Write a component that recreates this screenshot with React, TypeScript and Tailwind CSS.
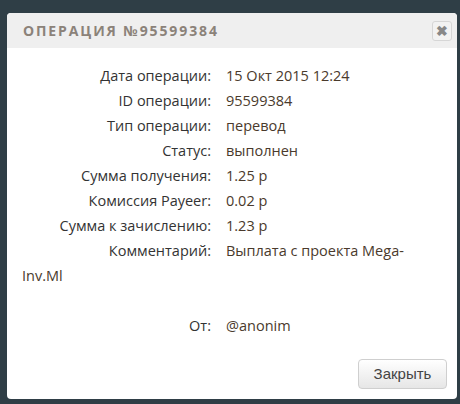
import React from 'react';

const rows: [string, string][] = [
    ['Дата операции:', '15 Окт 2015 12:24'],
    ['ID операции:', '95599384'],
    ['Тип операции:', 'перевод'],
    ['Статус:', 'выполнен'],
    ['Сумма получения:', '1.25 р'],
    ['Комиссия Payeer:', '0.02 р'],
    ['Сумма к зачислению:', '1.23 р'],
];

function Row({ label, value }: { label: string; value: string }) {
    return (
        <div className="flex leading-[25px]">
            <span className="w-[189px] mr-[15px] shrink-0 text-right text-[#333]">{label}</span>
            <span className="text-[#4a3a2c]">{value}</span>
        </div>
    );
}

export default function App() {
    return (
        <div className="w-[460px] h-[404px] bg-[#2f3e46] pt-[13px] pl-[7px] pr-[3px]" style={{ fontFamily: '"Open Sans", sans-serif' }}>
            <div className="bg-white rounded-[4px] h-[386px] flex flex-col overflow-hidden">
                <div className="h-[35px] bg-[#efefef] flex items-center justify-between pl-[16px] pr-[5px]">
                    <h1 className="text-[14px] font-bold tracking-[1.9px] text-[#8b8279]">ОПЕРАЦИЯ №95599384</h1>
                    <button className="w-[20px] h-[20px] rounded-[3px] border border-[#d6d6d6] bg-[#f2f2f2] flex items-center justify-center text-[#888] text-[14px] font-bold leading-none">
                        ✖
                    </button>
                </div>
                <div className="pl-[15px] pr-[20px] pt-[15px] text-[14.5px]">
                    {rows.map(([l, v]) => (
                        <Row key={l} label={l} value={v} />
                    ))}
                    {/* comment wraps back to the left edge */}
                    <Row label="Комментарий:" value="Выплата с проекта Mega-" />
                    <div className="leading-[25px] text-[#4a3a2c]">Inv.Ml</div>
                    <div className="h-[25px]" />
                    <Row label="От:" value="@anonim" />
                </div>
                <div className="mt-auto flex justify-end pr-[10px] pb-[10px]">
                    <button
                        className="w-[89px] h-[30px] rounded-[4px] border border-[#cfcfcf] bg-gradient-to-b from-white to-[#e6e6e6] text-[15px] text-[#444]"
                        style={{ fontFamily: '"Liberation Sans", Arial, sans-serif' }}
                    >
                        Закрыть
                    </button>
                </div>
            </div>
        </div>
    );
}
